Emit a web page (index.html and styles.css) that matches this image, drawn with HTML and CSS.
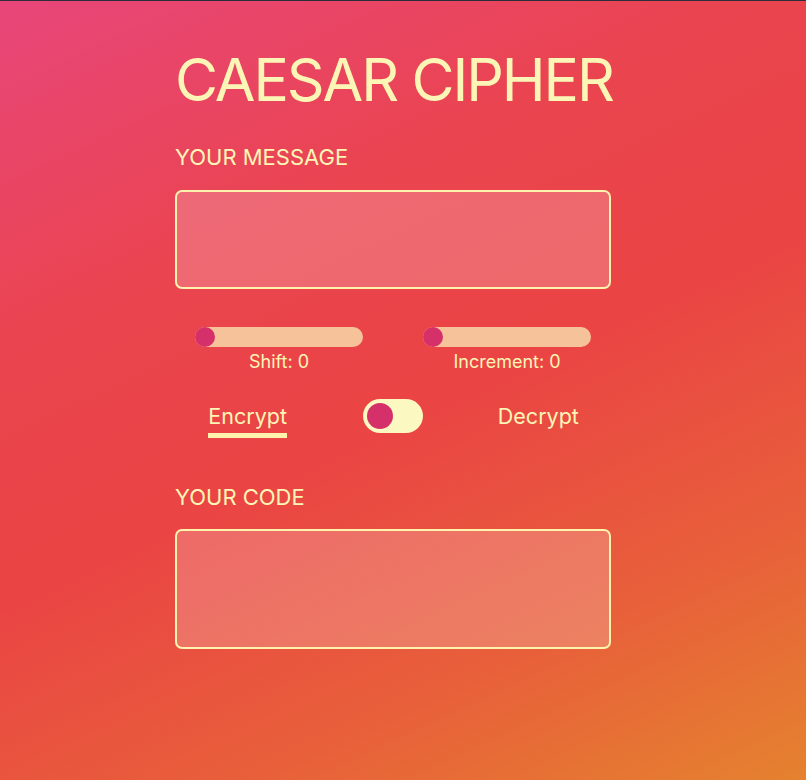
FILE: index.html
```html
<!DOCTYPE html>
<html lang="en">
<head>
<meta charset="utf-8">
<title>Caesar Cipher</title>
<link rel="stylesheet" href="styles.css">
</head>
<body>
<main class="app">
  <h1 class="title">CAESAR CIPHER</h1>
  <label class="label" for="msg">YOUR MESSAGE</label>
  <textarea id="msg" class="box box-msg"></textarea>
  <div class="sliders">
    <div class="slider">
      <div class="track"><span class="knob"></span></div>
      <div class="slider-label">Shift: 0</div>
    </div>
    <div class="slider">
      <div class="track"><span class="knob"></span></div>
      <div class="slider-label">Increment: 0</div>
    </div>
  </div>
  <div class="modes">
    <span class="mode active">Encrypt</span>
    <span class="toggle"><span class="toggle-knob"></span></span>
    <span class="mode">Decrypt</span>
  </div>
  <label class="label label-code" for="code">YOUR CODE</label>
  <textarea id="code" class="box box-code"></textarea>
</main>
</body>
</html>
```
FILE: styles.css
```css
html {
  height: 100%;
}
body {
  margin: 0;
  min-height: 780px;
  border-top: 1px solid #2b2d3a;
  box-sizing: border-box;
  background: linear-gradient(155deg, #e8467a 0%, #ea4450 30%, #ea4444 52%, #e8603a 78%, #e5822f 100%);
  font-family: Inter, "Noto Sans", sans-serif;
  color: #fcf6b6;
}
.app {
  width: 436px;
  margin-left: 175px;
  padding-top: 43px;
  display: flex;
  flex-direction: column;
}
.title {
  margin: 0;
  font-size: 59px;
  font-weight: 400;
  line-height: 72px;
  letter-spacing: -2.1px;
  white-space: nowrap;
}
.label {
  margin-top: 27px;
  font-size: 22px;
  line-height: 28px;
}
.box {
  display: block;
  box-sizing: border-box;
  width: 436px;
  margin: 0;
  margin-top: 19px;
  border: 2px solid #fdf3ad;
  border-radius: 7px;
  background: rgba(255, 255, 255, 0.2);
  resize: none;
  font: inherit;
  color: inherit;
}
.box-msg {
  height: 99px;
}
.sliders {
  display: grid;
  grid-template-columns: 208px 208px;
  column-gap: 20px;
  margin-top: 38px;
}
.slider {
  display: flex;
  flex-direction: column;
  align-items: center;
}
.track {
  width: 168px;
  height: 20px;
  border-radius: 10px;
  background: #f6c29a;
  display: flex;
}
.knob {
  width: 20px;
  height: 20px;
  border-radius: 50%;
  background: #d5306a;
}
.slider-label {
  margin-top: 4px;
  font-size: 18px;
  line-height: 22px;
}
.modes {
  display: grid;
  grid-template-columns: 1fr 1fr 1fr;
  align-items: center;
  justify-items: center;
  margin-top: 26px;
}
.mode {
  font-size: 21.5px;
  line-height: 28px;
  position: relative;
}
.mode.active::after {
  content: "";
  position: absolute;
  left: 0;
  right: 0;
  top: calc(100% + 3px);
  height: 5px;
  background: #fdf3ad;
}
.toggle {
  width: 60px;
  height: 34px;
  border-radius: 17px;
  background: #fcf8c2;
  display: flex;
  align-items: center;
  padding: 0 4px;
  box-sizing: border-box;
}
.toggle-knob {
  width: 26px;
  height: 26px;
  border-radius: 50%;
  background: #d5306a;
}
.label-code {
  margin-top: 50px;
}
.box-code {
  margin-top: 18px;
  height: 120px;
}
```
